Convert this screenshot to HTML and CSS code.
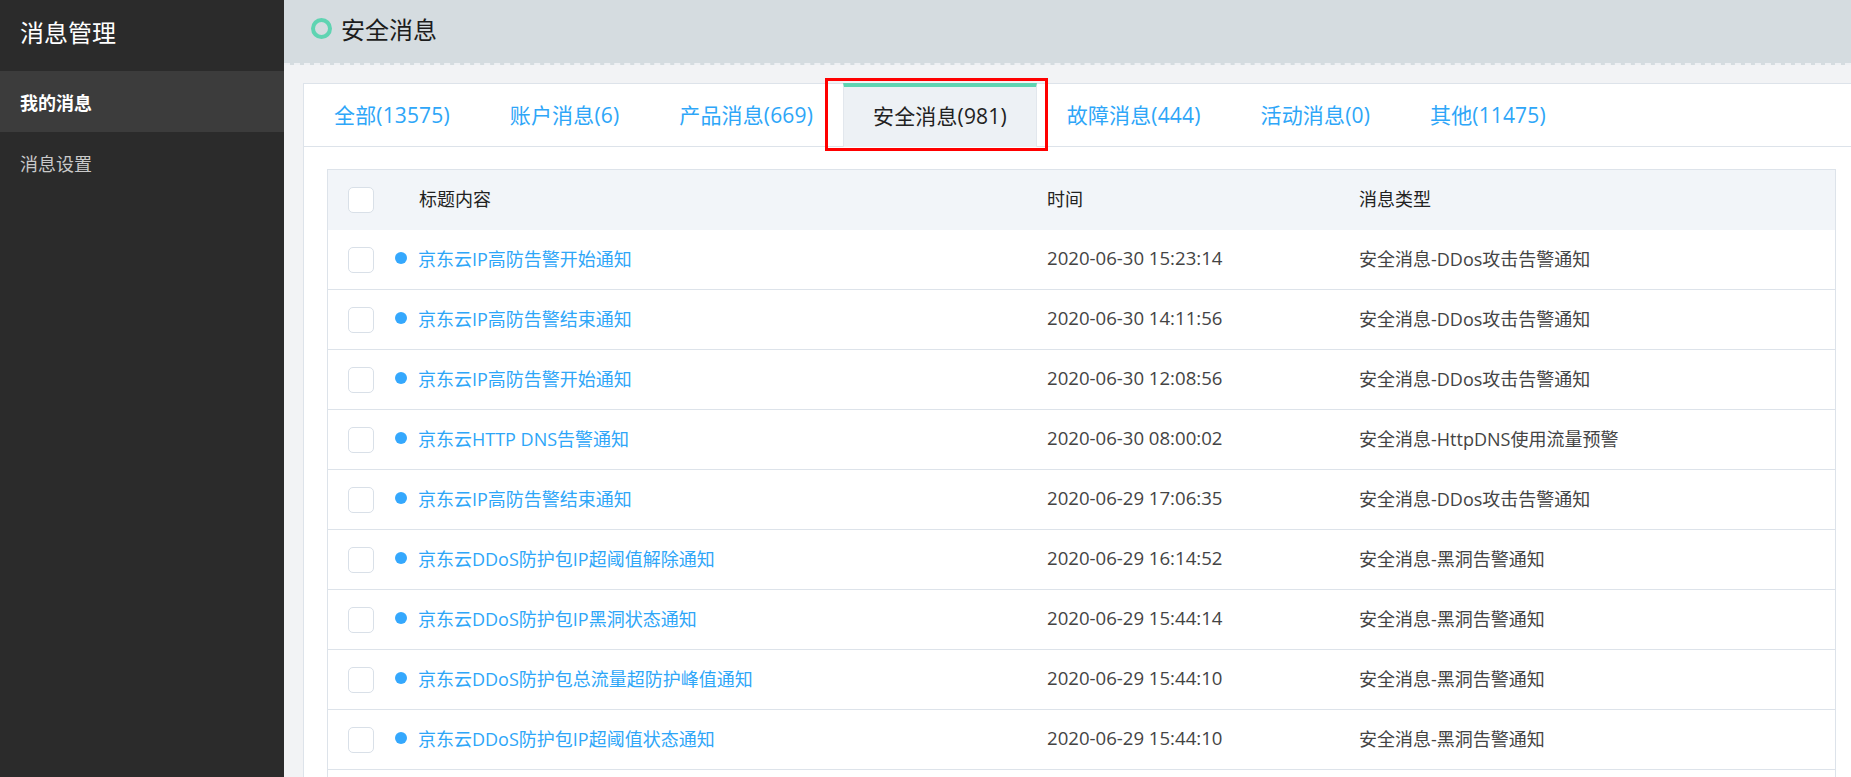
FILE: index.html
```html
<!DOCTYPE html>
<html lang="zh-CN">
<head>
<meta charset="utf-8">
<title>消息管理</title>
<link rel="stylesheet" href="styles.css">
</head>
<body>
<div class="app">
  <aside class="sidebar">
    <div class="sidebar-title">消息管理</div>
    <nav class="nav">
      <div class="nav-item active">我的消息</div>
      <div class="nav-item">消息设置</div>
    </nav>
  </aside>
  <main class="main">
    <header class="page-header">
      <span class="ring"></span>
      <h1 class="page-title">安全消息</h1>
    </header>
    <section class="content">
      <div class="card">
        <div class="tabs">
          <div class="tab">全部(13575)</div>
          <div class="tab">账户消息(6)</div>
          <div class="tab">产品消息(669)</div>
          <div class="tab active">安全消息(981)<span class="mark"></span></div>
          <div class="tab">故障消息(444)</div>
          <div class="tab">活动消息(0)</div>
          <div class="tab">其他(11475)</div>
        </div>
        <div class="table">
          <div class="row head">
            <div class="cell check"><span class="box"></span></div>
            <div class="cell title-h">标题内容</div>
            <div class="cell">时间</div>
            <div class="cell">消息类型</div>
          </div>
          <div class="row">
            <div class="cell check"><span class="box"></span></div>
            <div class="cell title"><span class="dot"></span><a class="link">京东云IP高防告警开始通知</a></div>
            <div class="cell time">2020-06-30 15:23:14</div>
            <div class="cell type">安全消息-DDos攻击告警通知</div>
          </div>
          <div class="row">
            <div class="cell check"><span class="box"></span></div>
            <div class="cell title"><span class="dot"></span><a class="link">京东云IP高防告警结束通知</a></div>
            <div class="cell time">2020-06-30 14:11:56</div>
            <div class="cell type">安全消息-DDos攻击告警通知</div>
          </div>
          <div class="row">
            <div class="cell check"><span class="box"></span></div>
            <div class="cell title"><span class="dot"></span><a class="link">京东云IP高防告警开始通知</a></div>
            <div class="cell time">2020-06-30 12:08:56</div>
            <div class="cell type">安全消息-DDos攻击告警通知</div>
          </div>
          <div class="row">
            <div class="cell check"><span class="box"></span></div>
            <div class="cell title"><span class="dot"></span><a class="link">京东云HTTP DNS告警通知</a></div>
            <div class="cell time">2020-06-30 08:00:02</div>
            <div class="cell type">安全消息-HttpDNS使用流量预警</div>
          </div>
          <div class="row">
            <div class="cell check"><span class="box"></span></div>
            <div class="cell title"><span class="dot"></span><a class="link">京东云IP高防告警结束通知</a></div>
            <div class="cell time">2020-06-29 17:06:35</div>
            <div class="cell type">安全消息-DDos攻击告警通知</div>
          </div>
          <div class="row">
            <div class="cell check"><span class="box"></span></div>
            <div class="cell title"><span class="dot"></span><a class="link">京东云DDoS防护包IP超阈值解除通知</a></div>
            <div class="cell time">2020-06-29 16:14:52</div>
            <div class="cell type">安全消息-黑洞告警通知</div>
          </div>
          <div class="row">
            <div class="cell check"><span class="box"></span></div>
            <div class="cell title"><span class="dot"></span><a class="link">京东云DDoS防护包IP黑洞状态通知</a></div>
            <div class="cell time">2020-06-29 15:44:14</div>
            <div class="cell type">安全消息-黑洞告警通知</div>
          </div>
          <div class="row">
            <div class="cell check"><span class="box"></span></div>
            <div class="cell title"><span class="dot"></span><a class="link">京东云DDoS防护包总流量超防护峰值通知</a></div>
            <div class="cell time">2020-06-29 15:44:10</div>
            <div class="cell type">安全消息-黑洞告警通知</div>
          </div>
          <div class="row">
            <div class="cell check"><span class="box"></span></div>
            <div class="cell title"><span class="dot"></span><a class="link">京东云DDoS防护包IP超阈值状态通知</a></div>
            <div class="cell time">2020-06-29 15:44:10</div>
            <div class="cell type">安全消息-黑洞告警通知</div>
          </div>
          <div class="row row-last">
            <div class="cell check"><span class="box"></span></div>
          </div>
        </div>
      </div>
    </section>
  </main>
</div>
</body>
</html>
```

FILE: styles.css
```css
html, body {
  margin: 0;
  padding: 0;
  height: 100%;
  overflow: hidden;
}
body {
  font-family: "Open Sans", "Noto Sans CJK SC", sans-serif;
  color: #333;
}
.app {
  display: flex;
  height: 100vh;
}
.sidebar {
  width: 284px;
  flex-shrink: 0;
  background: #2b2b2b;
  color: #fff;
}
.sidebar-title {
  height: 71px;
  box-sizing: border-box;
  display: flex;
  align-items: center;
  padding: 0 0 9px 20px;
  font-size: 24px;
  color: #fff;
}
.nav-item {
  height: 61px;
  display: flex;
  align-items: center;
  padding-left: 20px;
  font-size: 18px;
  color: #c9c9c9;
}
.nav-item.active {
  background: #3c3c3c;
  color: #fff;
  font-weight: bold;
}
.main {
  flex: 1;
  min-width: 0;
  background: #f2f3f5;
  display: flex;
  flex-direction: column;
}
.page-header {
  height: 57px;
  flex-shrink: 0;
  background: #d5dce0;
  border-bottom: 2px dashed #eef0f3;
  display: flex;
  align-items: center;
  padding: 0 0 6px 27px;
  box-sizing: content-box;
}
.ring {
  width: 21px;
  height: 21px;
  box-sizing: border-box;
  border: 4px solid #5fd4b2;
  border-radius: 50%;
  margin-right: 9px;
}
.page-title {
  margin: 0;
  font-size: 24px;
  font-weight: normal;
  color: #1c1c1c;
}
.content {
  flex: 1;
  padding: 18px 0 0 19px;
}
.card {
  background: #fff;
  border: 1px solid #dde3ea;
  border-right: 0;
  padding: 0 15px 0 23px;
  height: 100%;
}
.tabs {
  display: flex;
  height: 62px;
  border-bottom: 1px solid #dde3ea;
  margin: 0 -15px 22px -23px;
}
.tab {
  position: relative;
  padding: 0 30px 2px;
  display: flex;
  align-items: center;
  font-size: 21px;
  letter-spacing: 0.15px;
  color: #2ea6f8;
  white-space: nowrap;
}
.tab.active {
  background: #edf1f5;
  color: #222;
  border-top: 4px solid #5fd4b2;
  border-left: 1px solid #e2e7ed;
  border-right: 1px solid #e2e7ed;
  margin-top: -1px;
  margin-bottom: -1px;
  padding: 0 29px 5px;
}
.mark {
  position: absolute;
  top: -9px;
  left: -19px;
  right: -12px;
  bottom: -4px;
  border: 3px solid #ff0000;
}
.table {
  border: 1px solid #dde3ea;
  border-bottom: 0;
}
.row {
  display: grid;
  grid-template-columns: 67px 652px 312px 1fr;
  height: 60px;
  box-sizing: border-box;
  padding-bottom: 4px;
  border-bottom: 1px solid #dde3ea;
  align-items: center;
  font-size: 18px;
}
.row.head {
  background: #f2f5f9;
  border-bottom: 0;
  color: #222;
}
.row-last .box {
  margin-top: 4px;
}
.cell {
  white-space: nowrap;
}
.check {
  padding-left: 20px;
  display: flex;
  align-items: center;
}
.box {
  width: 26px;
  height: 26px;
  box-sizing: border-box;
  border: 1px solid #d9e0e8;
  border-radius: 5px;
  background: #fff;
  position: relative;
  top: 2px;
}
.title-h {
  padding-left: 24px;
}
.title {
  display: flex;
  align-items: center;
}
.dot {
  width: 12px;
  height: 12px;
  border-radius: 50%;
  background: #35a8fd;
  margin-right: 11px;
  flex-shrink: 0;
}
.link {
  color: #2ea6f8;
}
.time {
  color: #444;
  font-size: 18.6px;
}
.type {
  color: #444;
}
```
